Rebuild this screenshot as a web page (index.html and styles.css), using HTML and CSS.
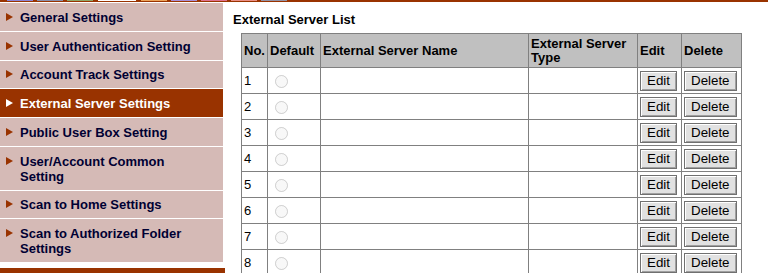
FILE: index.html
```html
<!DOCTYPE html>
<html lang="en">
<head>
    <meta charset="UTF-8">
    <title>External Server Settings</title>
    <link rel="stylesheet" href="styles.css">
</head>
<body>
    <div class="topbar">
        <span class="tab tab-purple"></span>
        <span class="tab tab-slate"></span>
        <span class="tab tab-green"></span>
        <span class="tab tab-white"></span>
        <span class="tab tab-orange"></span>
        <span class="tab tab-violet"></span>
        <span class="tab tab-pink"></span>
        <span class="tab tab-salmon"></span>
        <span class="tab tab-grey"></span>
    </div>
    <div class="layout">
        <!-- Left menu -->
        <nav class="menu">
            <ul class="menu-list">
                <li class="menu-item"><span class="arrow"></span><span>General Settings</span></li>
                <li class="menu-item"><span class="arrow"></span><span>User Authentication Setting</span></li>
                <li class="menu-item"><span class="arrow"></span><span>Account Track Settings</span></li>
                <li class="menu-item active"><span class="arrow"></span><span>External Server Settings</span></li>
                <li class="menu-item"><span class="arrow"></span><span>Public User Box Setting</span></li>
                <li class="menu-item"><span class="arrow"></span><span>User/Account Common Setting</span></li>
                <li class="menu-item"><span class="arrow"></span><span>Scan to Home Settings</span></li>
                <li class="menu-item"><span class="arrow"></span><span>Scan to Authorized Folder Settings</span></li>
            </ul>
            <div class="menu-foot"></div>
        </nav>

        <!-- Server list -->
        <main class="content">
            <h2 class="title">External Server List</h2>
            <table class="server-table">
                <colgroup>
                    <col style="width:26px">
                    <col style="width:53px">
                    <col style="width:208px">
                    <col style="width:109px">
                    <col style="width:44px">
                    <col style="width:60px">
                </colgroup>
                <thead>
                    <tr>
                        <th>No.</th>
                        <th>Default</th>
                        <th>External Server Name</th>
                        <th>External Server Type</th>
                        <th>Edit</th>
                        <th>Delete</th>
                    </tr>
                </thead>
                <tbody>
                    <tr><td>1</td><td><input type="radio" name="def" disabled></td><td></td><td></td><td><button>Edit</button></td><td><button>Delete</button></td></tr>
                    <tr><td>2</td><td><input type="radio" name="def" disabled></td><td></td><td></td><td><button>Edit</button></td><td><button>Delete</button></td></tr>
                    <tr><td>3</td><td><input type="radio" name="def" disabled></td><td></td><td></td><td><button>Edit</button></td><td><button>Delete</button></td></tr>
                    <tr><td>4</td><td><input type="radio" name="def" disabled></td><td></td><td></td><td><button>Edit</button></td><td><button>Delete</button></td></tr>
                    <tr><td>5</td><td><input type="radio" name="def" disabled></td><td></td><td></td><td><button>Edit</button></td><td><button>Delete</button></td></tr>
                    <tr><td>6</td><td><input type="radio" name="def" disabled></td><td></td><td></td><td><button>Edit</button></td><td><button>Delete</button></td></tr>
                    <tr><td>7</td><td><input type="radio" name="def" disabled></td><td></td><td></td><td><button>Edit</button></td><td><button>Delete</button></td></tr>
                    <tr><td>8</td><td><input type="radio" name="def" disabled></td><td></td><td></td><td><button>Edit</button></td><td><button>Delete</button></td></tr>
                    <tr><td>9</td><td><input type="radio" name="def" disabled></td><td></td><td></td><td><button>Edit</button></td><td><button>Delete</button></td></tr>
                    <tr><td>10</td><td><input type="radio" name="def" disabled></td><td></td><td></td><td><button>Edit</button></td><td><button>Delete</button></td></tr>
                </tbody>
            </table>
        </main>
    </div>
</body>
</html>
```

FILE: styles.css
```css
body {
    margin: 0;
    font-family: "Liberation Sans", Arial, sans-serif;
    font-size: 13px;
    color: #000;
    background: #fff;
    overflow: hidden;
}

/* Top strip with the little coloured tabs */
.topbar {
    height: 2px;
    margin-bottom: 1px;
    padding-left: 7px;
    background: #993300;
    display: flex;
    gap: 4px;
}
.tab {
    width: 26px;
    height: 1px;
}
.tab-purple { background: #8c84d6; }
.tab-slate { background: #8a90ad; }
.tab-green { background: #8fa86a; }
.tab-white { background: #fff; width: 38px; margin-left: 1px; margin-right: 1px; }
.tab-orange { background: #eca35a; }
.tab-violet { background: #a88fd8; }
.tab-pink { background: #e0708e; }
.tab-salmon { background: #e98e84; }
.tab-grey { background: #9393a6; }

.layout {
    display: flex;
}

/* Left menu */
.menu {
    width: 225px;
    flex-shrink: 0;
}
.menu-list {
    list-style: none;
    margin: 0;
    padding: 0;
    width: 223px;
}
.menu-item {
    display: flex;
    padding: 6.75px 20px 6px 6px;
    line-height: 15px;
    background: #d5bab6;
    border-bottom: 1px solid #fff;
    color: #000033;
    font-weight: bold;
}
.menu-item.active {
    background: #993300;
    color: #fff;
}
.arrow {
    flex-shrink: 0;
    width: 0;
    height: 0;
    margin: 3px 7px 0 0;
    border-left: 7px solid #993300;
    border-top: 4px solid transparent;
    border-bottom: 4px solid transparent;
}
.active .arrow {
    border-left-color: #fff;
}
.menu-foot {
    height: 8px;
    margin-top: 5px;
    background: #993300;
}

/* Main area */
.content {
    padding: 9px 0 0 8px;
}
.title {
    margin: 0 0 6px;
    font-size: 13px;
    line-height: 15px;
    font-weight: bold;
}
.server-table {
    margin-left: 8px;
    width: 500px;
    table-layout: fixed;
    border-collapse: collapse;
}
.server-table th,
.server-table td {
    border: 1px solid #808080;
    padding: 1px 2px;
    text-align: left;
    vertical-align: middle;
}
.server-table th {
    height: 31px;
    background: #c0c0c0;
    line-height: 14px;
}
.server-table td {
    height: 23px;
}
.server-table input[type="radio"] {
    margin: 0 0 0 5px;
    vertical-align: middle;
}
button {
    height: 20px;
    padding: 0 6px;
    font-family: "Liberation Sans", Arial, sans-serif;
    font-size: 13.33px;
    color: #000;
    background: #e1e1e1;
    border: 1px solid #707070;
    box-shadow: inset 1px 1px #fff, inset -1px -1px #a0a0a0;
}
```
